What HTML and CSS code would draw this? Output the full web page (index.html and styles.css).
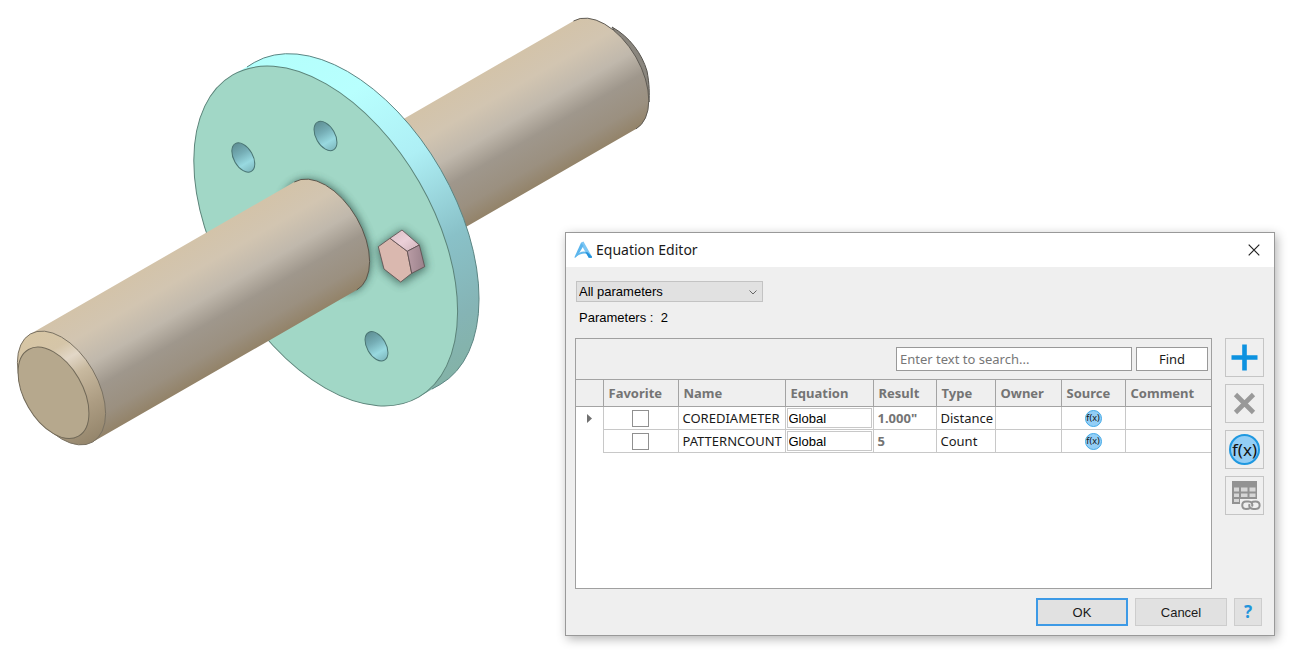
FILE: index.html
```html
<!DOCTYPE html>
<html lang="en">
<head>
<meta charset="utf-8">
<title>Equation Editor</title>
<link rel="stylesheet" href="styles.css">
</head>
<body>
<main class="workspace">
  <svg class="model" viewBox="0 0 660 460" role="img" aria-label="Flange assembly on a shaft">
    <defs>
      <linearGradient id="shaft" gradientUnits="userSpaceOnUse" x1="294" y1="182" x2="356" y2="290">
        <stop offset="0" stop-color="#d3c3a9"/>
        <stop offset=".22" stop-color="#d2c5b1"/>
        <stop offset=".45" stop-color="#c0b8ac"/>
        <stop offset=".64" stop-color="#9f978c"/>
        <stop offset=".85" stop-color="#9b9080"/>
        <stop offset="1" stop-color="#938369"/>
      </linearGradient>
      <linearGradient id="rim" gradientUnits="userSpaceOnUse" x1="255" y1="60" x2="445" y2="390">
        <stop offset="0" stop-color="#b3fffc"/>
        <stop offset=".2" stop-color="#b8fffe"/>
        <stop offset=".42" stop-color="#aeeff5"/>
        <stop offset=".66" stop-color="#89c1c8"/>
        <stop offset=".85" stop-color="#85b4b5"/>
        <stop offset="1" stop-color="#83b2a5"/>
      </linearGradient>
      <linearGradient id="chamfer" gradientUnits="userSpaceOnUse" x1="30" y1="334" x2="93" y2="442">
        <stop offset="0" stop-color="#d7c6a4"/>
        <stop offset=".2" stop-color="#d5c5a8"/>
        <stop offset=".32" stop-color="#e2d7c7"/>
        <stop offset=".46" stop-color="#c8b99f"/>
        <stop offset=".72" stop-color="#ad9d83"/>
        <stop offset="1" stop-color="#94856b"/>
      </linearGradient>
      <linearGradient id="hole" x1="0" y1="0" x2="1" y2="0">
        <stop offset="0" stop-color="#5f8f94"/>
        <stop offset=".35" stop-color="#75adb5"/>
        <stop offset=".7" stop-color="#98d9e0"/>
        <stop offset="1" stop-color="#7fb9bf"/>
      </linearGradient>
      <linearGradient id="bolt-top" x1="0" y1="0" x2="1" y2="1">
        <stop offset="0" stop-color="#dcbfc7"/>
        <stop offset=".5" stop-color="#ebd0d8"/>
        <stop offset="1" stop-color="#cfb2ba"/>
      </linearGradient>
      <linearGradient id="bolt-side" x1="0" y1="0" x2="1" y2="0">
        <stop offset="0" stop-color="#b99ca5"/>
        <stop offset="1" stop-color="#9b818b"/>
      </linearGradient>
      <filter id="soft" x="-30%" y="-30%" width="160%" height="160%"><feGaussianBlur stdDeviation="4"/></filter>
      <clipPath id="face"><ellipse cx="325.7" cy="236" rx="186" ry="108" transform="rotate(60 325.7 236)"/></clipPath>
    </defs>

    <!-- rear half of the shaft -->
    <path d="M612 27C630 37 642 54 647 71C649.500 84 649.500 94 649 102L644 80Z" fill="#8a867e" stroke="#55524c" stroke-width="1"/>
    <path d="M294.300 182L573.500 21A62 35.800 60 0 1 635.900 129L356.700 290Z" fill="url(#shaft)"/>
    <path d="M573.500 21A62 35.800 60 0 1 635.900 129" fill="none" stroke="#5f5b54" stroke-width="1"/>

    <!-- flange -->
    <path d="M232.700 75L254.200 62.500A185 107.400 60 0 1 440.200 384.500L418.700 397Z" fill="url(#rim)"/>
    <path d="M247 67L254.200 62.500A185 107.400 60 0 1 440.200 384.500L432 389" fill="none" stroke="#5c8583" stroke-width="1"/>
    <ellipse cx="325.7" cy="236" rx="186" ry="108" transform="rotate(60 325.7 236)" fill="#a1d7c6" stroke="#5b8379" stroke-width="1"/>

    <g clip-path="url(#face)">
      <ellipse cx="326" cy="236" rx="62" ry="37" transform="rotate(60 326 236)" fill="#2c4f46" opacity=".8" filter="url(#soft)"/>
      <path d="M377 247L402 229L421 244L427 268L401 285L382 270Z" fill="#36594f" opacity=".75" filter="url(#soft)"/>
    </g>

    <g fill="url(#hole)" stroke="#4a7573" stroke-width="1">
      <ellipse cx="243.300" cy="157.500" rx="16" ry="9.500" transform="rotate(60 243.3 157.5)"/>
      <ellipse cx="325.500" cy="136" rx="16" ry="9.500" transform="rotate(60 325.5 136)"/>
      <ellipse cx="376.500" cy="346.300" rx="16" ry="9.500" transform="rotate(60 376.5 346.3)"/>
    </g>

    <g stroke="#5c4b4d" stroke-width=".8" stroke-linejoin="round">
      <path d="M378.300 246.700L390 238.300L407.300 251.300L411.700 273.300L400.700 282L384 269Z" fill="#dab8af"/>
      <path d="M390 238.300L402 230L419.300 245L407.300 251.300Z" fill="url(#bolt-top)"/>
      <path d="M407.300 251.300L419.300 245L424.700 266.700L411.700 273.300Z" fill="url(#bolt-side)"/>
    </g>

    <!-- front half of the shaft -->
    <path d="M30.300 334L294.300 182A62 35.800 60 0 1 356.700 290L92.700 442Z" fill="url(#shaft)"/>
    <path d="M294.300 182A62 35.800 60 0 1 356.700 290" fill="none" stroke="#5b564c" stroke-width="1"/>
    <path d="M30.300 334A62 35.800 60 0 1 92.700 442A62 35.800 60 0 1 30.300 334Z" fill="url(#chamfer)" stroke="#7a7263" stroke-width="1"/>
    <ellipse cx="53.500" cy="392.800" rx="50" ry="29" transform="rotate(60 53.5 392.8)" fill="#b6a88d" stroke="#716958" stroke-width="1"/>
  </svg>

  <section class="dialog" role="dialog" aria-labelledby="dialog-title">
    <header class="titlebar">
      <svg class="app-logo" viewBox="0 0 20 20" aria-hidden="true">
        <path d="M7.500 1.500L10 .5L19 16.500L18.500 18L15.500 17.500L8.500 5.500Z" fill="#7cc6f4"/>
        <path d="M7.500 1.500L10 5L4.500 14.500L1 18L.5 17Z" fill="#5bb5ed"/>
        <path d="M1 17.500C4 12 9 9.500 14.500 12L15 14C10 12 5 14 1 17.500Z" fill="#62b9ee"/>
        <path d="M12 11.500L14.500 12L19 16.500L18.500 18L15.500 17.500Z" fill="#2593dc"/>
      </svg>
      <h1 class="title" id="dialog-title">Equation Editor</h1>
      <button class="close" type="button" aria-label="Close">
        <svg width="12" height="12" viewBox="0 0 12 12"><path d="M.7.7L11.300 11.300M11.300.7L.7 11.300" stroke="#222" stroke-width="1.200"/></svg>
      </button>
    </header>

    <div class="content">
      <div class="filter">
        <select class="filter-select" aria-label="Parameter filter"><option>All parameters</option></select>
        <svg class="chevron" viewBox="0 0 8 5" aria-hidden="true"><path d="M.5.5L4 4L7.500.5" fill="none" stroke="#666"/></svg>
      </div>
      <p class="count">Parameters :&nbsp; 2</p>

      <div class="body">
        <div class="grid">
          <form class="search">
            <input class="search-box" type="text" placeholder="Enter text to search..." aria-label="Search">
            <button class="find" type="button">Find</button>
          </form>
          <table class="params">
            <colgroup><col class="c-mark"><col class="c-fav"><col class="c-name"><col class="c-eq"><col class="c-res"><col class="c-type"><col class="c-own"><col class="c-src"><col></colgroup>
            <thead>
              <tr><th></th><th>Favorite</th><th>Name</th><th>Equation</th><th>Result</th><th>Type</th><th>Owner</th><th>Source</th><th>Comment</th></tr>
            </thead>
            <tbody>
              <tr>
                <td class="mark"><svg width="5" height="9" viewBox="0 0 5 9"><path d="M0 0L5 4.500L0 9Z" fill="#707070"/></svg></td>
                <td class="center"><input class="tick" type="checkbox" aria-label="Favorite COREDIAMETER"></td>
                <td>COREDIAMETER</td>
                <td class="eq"><input class="eq-box" type="text" value="Global" aria-label="Equation COREDIAMETER"></td>
                <td class="result">1.000"</td><td>Distance</td><td></td>
                <td class="center"><span class="fx">f(x)</span></td><td></td>
              </tr>
              <tr>
                <td class="mark"></td>
                <td class="center"><input class="tick" type="checkbox" aria-label="Favorite PATTERNCOUNT"></td>
                <td>PATTERNCOUNT</td>
                <td class="eq"><input class="eq-box" type="text" value="Global" aria-label="Equation PATTERNCOUNT"></td>
                <td class="result">5</td><td>Count</td><td></td>
                <td class="center"><span class="fx">f(x)</span></td><td></td>
              </tr>
            </tbody>
          </table>
        </div>

        <div class="tools">
          <button class="tool" type="button" aria-label="Add">
            <svg viewBox="0 0 37 37"><path d="M18.500 5.500V31.500M5.500 18.500H31.500" stroke="#0d92e0" stroke-width="4.600"/></svg>
          </button>
          <button class="tool" type="button" aria-label="Delete">
            <svg viewBox="0 0 37 37"><path d="M9.500 9.500L27.500 27.500M27.500 9.500L9.500 27.500" stroke="#999" stroke-width="4.600"/></svg>
          </button>
          <button class="tool" type="button"><span class="fx fx-large">f(x)</span></button>
          <button class="tool" type="button" aria-label="Link table">
            <svg viewBox="0 0 37 37">
              <path d="M6 4H31V22H14V27H6Z" fill="#929292"/>
              <path d="M8 10.500H13V14.500H8ZM15 10.500H21.500V14.500H15ZM23.500 10.500H29.500V14.500H23.500ZM8 16.500H13V20H8ZM15 16.500H21.500V20H15ZM23.500 16.500H29.500V20H23.500ZM8 22H13V25H8Z" fill="#d6d6d6"/>
              <path d="M19 22H29C36 22 36 34 29 34H19C13 34 13 22 19 22Z" fill="#efefef"/>
              <g fill="none" stroke="#929292" stroke-width="2">
                <path d="M24 31C23 32 22 32 20 32C15 32 15 24.500 20 24.500H22.500C25.500 24.500 27 27 26 29.500"/>
                <path d="M25.500 25.500C26.500 24.500 27.500 24.500 29.500 24.500C35 24.500 35 32 29.500 32H27.500C24 32 22.500 29.500 23.500 27"/>
              </g>
            </svg>
          </button>
        </div>
      </div>

      <footer class="actions">
        <button class="action primary" type="button">OK</button>
        <button class="action" type="button">Cancel</button>
        <button class="action help" type="button" aria-label="Help">?</button>
      </footer>
    </div>
  </section>
</main>
</body>
</html>
```
FILE: styles.css
```css
* { box-sizing: border-box; }

body {
  margin: 0;
  background: #fff;
  color: #1a1a1a;
  font-family: "Liberation Sans", Arial, sans-serif;
  font-size: 13px;
}

button, input, select { font: inherit; color: inherit; margin: 0; border-radius: 0; }
button { padding: 0; }

.workspace { position: relative; min-height: 100vh; overflow: hidden; }
.model { display: block; width: 660px; height: 460px; }

.dialog {
  position: absolute;
  top: 232px;
  left: 565px;
  right: 25px;
  background: #efefef;
  border: 1px solid #999;
  box-shadow: 2px 3px 10px rgba(0, 0, 0, .3);
}

.titlebar {
  display: flex;
  align-items: center;
  gap: 3px;
  height: 34px;
  padding: 0 14px 0 8px;
  background: #fff;
}
.app-logo { width: 19px; height: 19px; }
.title {
  flex: 1;
  margin: 0;
  font: 400 14px/20px "Noto Sans", "Open Sans", sans-serif;
}
.close { display: flex; border: 0; background: none; }

.content { padding: 14px 10px 9px 9px; }

.filter { position: relative; width: 187px; height: 21px; margin-left: 1px; }
.filter-select {
  appearance: none;
  width: 100%;
  height: 100%;
  padding: 0 2px;
  border: 1px solid #c3c3c3;
  background: #e1e1e1;
  color: #000;
}
.chevron { position: absolute; right: 6px; top: 9px; width: 8px; height: 5px; }
.count { margin: 8px 0 12px 4px; color: #000; line-height: 16px; }

.body { display: flex; gap: 13px; }
.grid {
  flex: 1;
  min-height: 251px;
  border: 1px solid #a0a0a0;
  background: #fff;
  font-family: "Noto Sans", "Open Sans", sans-serif;
}
.search {
  display: flex;
  justify-content: flex-end;
  gap: 4px;
  padding: 8px 3px 8px 0;
  background: #efefef;
}
.search-box {
  width: 236px;
  height: 24px;
  padding: 0 3px;
  border: 1px solid #999;
  background: #fff;
}
.search-box::placeholder { color: #777; opacity: 1; }
.find { width: 72px; height: 24px; border: 1px solid #999; background: #fff; }

.params { width: 100%; table-layout: fixed; border-collapse: collapse; }
.c-mark { width: 27px; }
.c-fav { width: 75px; }
.c-name { width: 107px; }
.c-eq { width: 88px; }
.c-res { width: 63px; }
.c-type { width: 59px; }
.c-own { width: 66px; }
.c-src { width: 64px; }
.params th {
  height: 27px;
  padding: 0 5px;
  border: 1px solid #a3a3a3;
  background: #efefef;
  color: #747474;
  font-weight: 700;
  line-height: 18px;
  text-align: left;
}
.params td {
  height: 23px;
  padding: 0 0 0 4px;
  border: 1px solid #c8c8c8;
  line-height: 18px;
  white-space: nowrap;
}
.params th:first-child, .params td:first-child { border-left: 0; }
.params th:last-child, .params td:last-child { border-right: 0; }
.params .mark { padding: 0; border-bottom: 0; border-top: 0; text-align: center; }
.params .center { padding: 0; text-align: center; }
.params .eq { padding: 0 1px; }
.params .result { color: #747474; font-weight: 700; }
.tick {
  appearance: none;
  display: block;
  width: 17px;
  height: 17px;
  margin: 0 auto;
  border: 1px solid #909090;
  background: #fff;
}
.eq-box {
  display: block;
  width: 100%;
  height: 20px;
  padding: 0 1px;
  border: 1px solid #c8c8c8;
  background: #fff;
  color: #000;
  font-family: "Liberation Sans", Arial, sans-serif;
}
.fx {
  display: flex;
  align-items: center;
  justify-content: center;
  width: 17px;
  height: 17px;
  margin: 0 auto;
  border: 1px solid #43aae8;
  border-radius: 50%;
  background: #93cef6;
  color: #111;
  font: 9px/12px "Noto Sans", sans-serif;
}
.fx-large { width: 31px; height: 31px; border: 2px solid #1f98e0; font-size: 17px; line-height: 20px; }

.tools { display: flex; flex-direction: column; gap: 7px; }
.tool {
  display: flex;
  align-items: center;
  width: 39px;
  height: 39px;
  border: 1px solid #c5c5c5;
  background: #efefef;
}
.tool svg { display: block; width: 37px; height: 37px; }

.actions { display: flex; justify-content: flex-end; gap: 7px; margin: 9px 2px 0 0; }
.action { width: 92px; height: 28px; border: 1px solid #cdcdcd; background: #e1e1e1; }
.primary { border: 2px solid #3d9ae6; }
.help { width: 28px; color: #1f95dc; font: 700 17px/20px "Noto Sans", sans-serif; }
```
